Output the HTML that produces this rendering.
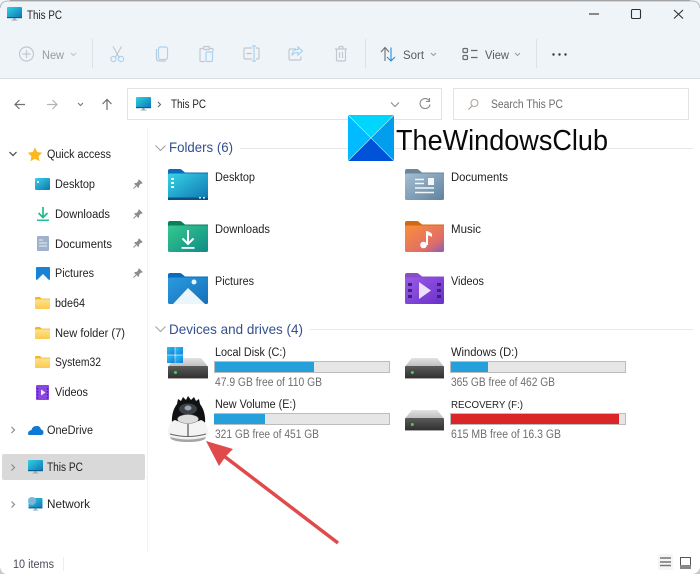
<!DOCTYPE html>
<html lang="en"><head><meta charset="utf-8"><title>This PC</title>
<style>
html,body{margin:0;padding:0;background:#fff;width:700px;height:574px;overflow:hidden}
svg{display:block;position:absolute;left:0;top:0}
text{font-family:"Liberation Sans",sans-serif;font-size:11.5px;fill:#1f1f1f}
.g{fill:#6e6e6e}.h{font-size:14px;fill:#34508f}.d{fill:#9a9a9a}.s{fill:#5a5a5a}
.ic{fill:none;stroke:#c2c8cd;stroke-width:1.2}
.bl{fill:none;stroke:#a9d3f0;stroke-width:1.2}
.nv{fill:none;stroke:#6a6a6a;stroke-width:1.2}
.ch{fill:none;stroke:#6f6f6f;stroke-width:1.2}
</style></head><body>
<svg width="700" height="574" viewBox="0 0 700 574" xmlns="http://www.w3.org/2000/svg">
<defs>
<linearGradient id="mon" x1="0" y1="0" x2="1" y2="1"><stop offset="0" stop-color="#2fd3e0"/><stop offset="1" stop-color="#0d74b8"/></linearGradient>
<linearGradient id="fd" x1="0" y1="0" x2="1" y2="1"><stop offset="0" stop-color="#38d4e8"/><stop offset="1" stop-color="#0f74b0"/></linearGradient>
<linearGradient id="fg" x1="0" y1="0" x2="1" y2="1"><stop offset="0" stop-color="#35c98f"/><stop offset="1" stop-color="#0f8b86"/></linearGradient>
<linearGradient id="fp" x1="0" y1="0" x2="1" y2="1"><stop offset="0" stop-color="#2a9be0"/><stop offset="1" stop-color="#1770b8"/></linearGradient>
<linearGradient id="fdoc" x1="0" y1="0" x2="1" y2="1"><stop offset="0" stop-color="#a5bfd3"/><stop offset="1" stop-color="#60829e"/></linearGradient>
<linearGradient id="fm" x1="0" y1="0" x2="1" y2="1"><stop offset="0" stop-color="#fb8f3a"/><stop offset=".7" stop-color="#df6d68"/><stop offset="1" stop-color="#8d5cb8"/></linearGradient>
<linearGradient id="fv" x1="0" y1="0" x2="1" y2="1"><stop offset="0" stop-color="#9a5be8"/><stop offset="1" stop-color="#6a2fc8"/></linearGradient>
<linearGradient id="yf" x1="0" y1="0" x2="0" y2="1"><stop offset="0" stop-color="#ffe38a"/><stop offset="1" stop-color="#fbc94f"/></linearGradient>
<linearGradient id="hd" x1="0" y1="0" x2="0" y2="1"><stop offset="0" stop-color="#5a5a5a"/><stop offset="1" stop-color="#2f2f2f"/></linearGradient>
<linearGradient id="ht" x1="0" y1="0" x2="0" y2="1"><stop offset="0" stop-color="#e2e2e2"/><stop offset="1" stop-color="#bdbdbd"/></linearGradient>
<linearGradient id="win" x1="0" y1="0" x2="1" y2="1"><stop offset="0" stop-color="#2fc3f5"/><stop offset="1" stop-color="#0f7fd8"/></linearGradient>
<symbol id="pc" viewBox="0 0 15 14" overflow="visible"><rect x="0" y="0" width="15" height="11" rx="1" fill="url(#mon)"/><rect x="0" y="10" width="15" height="1.2" fill="#0b5d94"/><rect x="6.5" y="11" width="2" height="2" fill="#7d98a8"/><rect x="4.5" y="12.6" width="6" height="1" fill="#9db2bf"/></symbol>
<symbol id="yfold" viewBox="0 0 15 12" overflow="visible"><path d="M0 1.2C0 .5.5 0 1.2 0H5l1.6 1.6H15V3H0Z" fill="#f0b52c"/><rect x="0" y="2.4" width="15" height="9.6" rx="1" fill="url(#yf)"/></symbol>
<symbol id="pin" viewBox="0 0 10 10" overflow="visible"><path d="M6 .3 9.7 4 8.8 4.8 8 4.6 6.2 6.4 6 8.4 5.2 8.9 1.2 4.9 1.7 4.1 3.7 3.9 5.4 2 5.2 1.2Z" fill="#8c8c8c"/><path d="M3 7 .5 9.5" stroke="#8c8c8c" stroke-width="1"/></symbol>
<symbol id="hdd" viewBox="0 0 40 21" overflow="visible" preserveAspectRatio="none"><path d="M7 0H33L40 8.500H0Z" fill="url(#ht)"/><rect x="0" y="8" width="40" height="12.500" rx="1" fill="url(#hd)"/><rect x="0" y="20" width="40" height="1" fill="#a8a8a8"/><rect x="6" y="13" width="3" height="3" rx="1.5" fill="#3fd35a"/></symbol>
</defs>

<rect width="700" height="574" fill="#fff"/>
<!-- title + toolbar -->
<rect x="0" y="0" width="700" height="78" fill="#eff4f9"/>
<rect x="0" y="78" width="700" height="1" fill="#dcdfe2"/>
<path d="M0 8Q1 1 8 1H692Q699 1 700 8" fill="none" stroke="#b5b7b9" stroke-width="1"/>
<rect x="10" y="0" width="680" height=".8" fill="#9d9d9d"/>
<use href="#pc" x="7" y="7" width="15" height="14"/>
<text x="27" y="19" textLength="35" lengthAdjust="spacingAndGlyphs">This PC</text>

<path d="M589 14h10" stroke="#303030" stroke-width="1.1"/>
<rect x="631.5" y="9.5" width="9" height="9" rx="1.2" fill="none" stroke="#303030" stroke-width="1.1"/>
<path d="M674 10l9 8.500M683 10l-9 8.500" stroke="#303030" stroke-width="1.1"/>

<circle cx="26.500" cy="54" r="7" class="ic"/><path d="M26.500 50v8M22.500 54h8" class="ic"/>
<text x="42" y="59" class="d" textLength="22" lengthAdjust="spacingAndGlyphs">New</text>
<path d="M71 53l2.500 2.500L76 53" class="ic"/>
<rect x="92" y="39" width="1" height="29" fill="#dde1e5"/>
<!-- cut -->
<path d="M113 46.500l6.500 11.500M121.500 46.500l-6.500 11.500" fill="none" stroke="#bfc5ca" stroke-width="1.1"/>
<circle cx="113.500" cy="59" r="2.600" class="bl"/><circle cx="121" cy="59" r="2.600" class="bl"/>
<!-- copy -->
<rect x="158.500" y="47" width="9" height="12.500" rx="2" class="bl"/><path d="M156.500 49v9.500q0 2.500 2.500 2.500h7" class="ic"/>
<!-- paste -->
<path d="M203 48.500h-2q-1 0-1 1v11q0 1 1 1h4M210 48.500h2q1 0 1 1v2" class="ic"/><rect x="203.500" y="46.500" width="6" height="3" rx="1" class="ic"/><rect x="206" y="52" width="6.500" height="9.500" rx="1" class="bl"/>
<!-- rename -->
<path d="M252 48h-6.500q-1.500 0-1.500 1.500v8q0 1.500 1.500 1.500H252M256 48h1.500q1.500 0 1.500 1.500v8q0 1.500-1.500 1.500H256" class="ic"/><path d="M254 46v15M252 46h4M252 61h4" class="bl"/><path d="M246.500 53.500h5" stroke="#b8bec4" stroke-width="1.200"/>
<!-- share -->
<path d="M296 49h-5.500q-1.500 0-1.500 1.500v8q0 1.500 1.500 1.500h9q1.500 0 1.500-1.500v-2" class="ic"/><path d="M298 47l4.500 4-4.500 4v-2.500c-3 0-5 1-6 3 0-4 2.500-6 6-6Z" class="bl"/>
<!-- delete -->
<path d="M335 49h12M339 49v-1.500q0-1 1-1h2q1 0 1 1V49M336.500 49v10.500q0 1.500 1.500 1.500h6q1.500 0 1.500-1.500V49M339.500 52v6M342.500 52v6" class="ic"/>
<rect x="365" y="39" width="1" height="29" fill="#dde1e5"/>
<path d="M385 61V48M381 52l4-4.500 4 4.500" fill="none" stroke="#707070" stroke-width="1.100"/><path d="M391 47.500V61M387 57l4 4 4-4" fill="none" stroke="#2a8bdc" stroke-width="1.100"/>
<text x="403" y="59" class="s" textLength="21" lengthAdjust="spacingAndGlyphs">Sort</text>
<path d="M431 53l2.500 2.500L436 53" fill="none" stroke="#9a9a9a" stroke-width="1"/>
<rect x="463" y="48.500" width="4.500" height="4" rx="1" class="nv"/><rect x="463" y="55.500" width="4.500" height="4" rx="1" class="nv"/><path d="M471 50.500h6.500M471 57.500h6.500" class="nv"/>
<text x="485" y="59" class="s" textLength="24" lengthAdjust="spacingAndGlyphs">View</text>
<path d="M515 53l2.500 2.500L520 53" fill="none" stroke="#9a9a9a" stroke-width="1"/>
<rect x="536" y="39" width="1" height="29" fill="#dde1e5"/>
<circle cx="553.500" cy="54.500" r="1.200" fill="#333"/><circle cx="559.500" cy="54.500" r="1.200" fill="#333"/><circle cx="565.500" cy="54.500" r="1.200" fill="#333"/>

<!-- nav -->
<path d="M25 104.500H15M19.500 100l-4.500 4.500 4.500 4.500" fill="none" stroke="#6f6f6f" stroke-width="1.200"/>
<path d="M47 104.500H57M52.500 100l4.500 4.500-4.500 4.500" fill="none" stroke="#b3b3b3" stroke-width="1.200"/>
<path d="M78 103l2.500 2.500L83 103" fill="none" stroke="#777" stroke-width="1.100"/>
<path d="M107 110V99.500M102.500 104l4.500-4.500 4.500 4.500" fill="none" stroke="#6f6f6f" stroke-width="1.200"/>
<rect x="127.500" y="88.500" width="314" height="31" fill="#fff" stroke="#e3e3e3"/>
<use href="#pc" x="136" y="97" width="15" height="14"/>
<path d="M158 102l2.500 2.500-2.500 2.500" fill="none" stroke="#666" stroke-width="1.100"/>
<text x="171" y="108" textLength="35" lengthAdjust="spacingAndGlyphs">This PC</text>
<path d="M391 102.500l4 4 4-4" fill="none" stroke="#8a8a8a" stroke-width="1.100"/>
<path d="M429 100.500a5 5 0 1 0 1 4M429.500 98v3.500H426" fill="none" stroke="#8a8a8a" stroke-width="1.100"/>
<rect x="453.500" y="88.500" width="235" height="31" fill="#fff" stroke="#e3e3e3"/>
<circle cx="474.500" cy="103" r="3.500" fill="none" stroke="#a9a9a9" stroke-width="1.100"/><path d="M472 106l-3.500 3.500" stroke="#c98f6a" stroke-width="1.100"/>
<text x="491" y="108" class="g" textLength="72" lengthAdjust="spacingAndGlyphs">Search This PC</text>

<!-- sidebar -->
<rect x="147" y="128" width="1" height="424" fill="#f2f2f2"/>
<rect x="2" y="454" width="143" height="26" rx="2" fill="#d9d9d9"/>
<path d="M9.500 152l3.500 3.500 3.500-3.500" fill="none" stroke="#444" stroke-width="1.200"/>
<path d="M35 147.500l2.200 4.500 5 .7-3.600 3.500.9 5-4.500-2.400-4.500 2.400.9-5-3.600-3.500 5-.7Z" fill="#fbb81c"/>
<text x="47" y="158" textLength="64" lengthAdjust="spacingAndGlyphs">Quick access</text>

<rect x="35" y="178" width="15" height="12" rx="1" fill="url(#fd)"/><rect x="37" y="181" width="2" height="2" fill="#e8fbff"/>
<text x="55" y="188" textLength="40" lengthAdjust="spacingAndGlyphs">Desktop</text>
<use href="#pin" x="133" y="179" width="10" height="10"/>

<path d="M43 207v10M38.500 213l4.500 4.500 4.500-4.500" fill="none" stroke="#21b98a" stroke-width="1.700"/><rect x="37" y="219.500" width="12" height="1.500" fill="#1fc09a"/>
<text x="55" y="218" textLength="55" lengthAdjust="spacingAndGlyphs">Downloads</text>
<use href="#pin" x="133" y="209" width="10" height="10"/>

<rect x="37" y="236" width="12" height="15" rx="1" fill="#9fb2cb"/><path d="M39 240h4M39 243h8M39 246h8" stroke="#e8eef5" stroke-width="1"/>
<text x="55" y="248" textLength="57" lengthAdjust="spacingAndGlyphs">Documents</text>
<use href="#pin" x="133" y="238" width="10" height="10"/>

<rect x="36" y="267" width="14" height="13" rx="1" fill="#1a82d6"/><path d="M37 280l6-6 6 6Z" fill="#f2f8fd"/>
<text x="55" y="277" textLength="39" lengthAdjust="spacingAndGlyphs">Pictures</text>
<use href="#pin" x="133" y="268" width="10" height="10"/>

<use href="#yfold" x="35" y="297" width="15" height="12"/>
<text x="55" y="307" textLength="30" lengthAdjust="spacingAndGlyphs">bde64</text>
<use href="#yfold" x="35" y="327" width="15" height="12"/>
<text x="55" y="337" textLength="70" lengthAdjust="spacingAndGlyphs">New folder (7)</text>
<use href="#yfold" x="35" y="356" width="15" height="12"/>
<text x="55" y="366" textLength="46" lengthAdjust="spacingAndGlyphs">System32</text>
<rect x="36" y="385" width="13" height="15" rx="1" fill="#8b45e0"/><path d="M41 389.500l4.500 3-4.500 3Z" fill="#f5ecff"/><path d="M37.500 388v11M47.500 388v11" stroke="#4e1f99" stroke-width="1.300" stroke-dasharray="1.500 1.500"/>
<text x="55" y="396" textLength="33" lengthAdjust="spacingAndGlyphs">Videos</text>

<path d="M11.500 427l3 3-3 3" fill="none" stroke="#8a8a8a" stroke-width="1.200"/>
<path d="M28 434q0-3.500 3.500-4 1-4.500 6-4 3 .5 3.500 3.500 2.500.5 2.500 3 0 2.500-2.500 2.500H30q-2 0-2-1Z" fill="#0f78d4"/>
<text x="47" y="434" textLength="46" lengthAdjust="spacingAndGlyphs">OneDrive</text>

<path d="M11.500 464.500l3 3-3 3" fill="none" stroke="#8a8a8a" stroke-width="1.200"/>
<use href="#pc" x="28" y="460" width="15" height="14"/>
<text x="47" y="471" textLength="36" lengthAdjust="spacingAndGlyphs">This PC</text>

<path d="M11.500 501.500l3 3-3 3" fill="none" stroke="#8a8a8a" stroke-width="1.200"/>
<use href="#pc" x="28" y="498" width="15" height="13"/><circle cx="32" cy="501" r="4" fill="#7fb6d8"/>
<text x="47" y="508" textLength="43" lengthAdjust="spacingAndGlyphs">Network</text>

<text x="13" y="568" style="fill:#4a4a5a" textLength="41" lengthAdjust="spacingAndGlyphs">10 items</text>
<rect x="63" y="557" width="1" height="14" fill="#eee"/>
<rect x="658" y="554" width="15" height="16" fill="#f5f5f5"/>
<path d="M660 558h11M660 562h11" stroke="#333" stroke-width="1"/><path d="M660 565.500h11" stroke="#777" stroke-width="1.500"/>
<rect x="680.500" y="557.500" width="10" height="11" fill="#fff" stroke="#555"/><rect x="680" y="565" width="11" height="4" fill="#888"/>
<path d="M693 574q5-1 7-6v6Z" fill="#c9c9c9"/><path d="M0 567q1 6 6 7H0Z" fill="#c9c9c9"/>

<!-- Folders -->
<path d="M155.500 145.500l5 5 5-5" fill="none" stroke="#a0a0a0" stroke-width="1"/>
<text x="169" y="152" class="h" textLength="64" lengthAdjust="spacingAndGlyphs">Folders (6)</text>
<rect x="240" y="148" width="453" height="1" fill="#e8e8e8"/>

<!-- folder icons -->
<g>
<path d="M168 171q0-2 2-2h10q1 0 2 1l3 2.500h23v2h-40Z" fill="#0c6cbc"/>
<rect x="168" y="173.500" width="40" height="26.500" rx="1.500" fill="url(#fd)"/><rect x="168" y="197.500" width="40" height="2.500" fill="#0b4f84"/>
<path d="M171 178h3v2h-3ZM171 182h3v2h-3ZM171 186h3v2h-3Z" fill="#e8fbff"/><path d="M199 197h2v1.500h-2ZM203 197h2v1.500h-2Z" fill="#d6f5fb"/>
</g>
<g>
<path d="M168 223q0-2 2-2h10q1 0 2 1l3 2.500h23v2h-40Z" fill="#0a7f5f"/>
<rect x="168" y="225.500" width="40" height="26.500" rx="1.500" fill="url(#fg)"/>
<path d="M188 230v14M182.500 238.500l5.500 5.500 5.500-5.500" fill="none" stroke="#fff" stroke-width="2"/><rect x="181.500" y="247" width="13" height="1.800" fill="#fff"/>
</g>
<g>
<path d="M168 275q0-2 2-2h10q1 0 2 1l3 2.500h23v2h-40Z" fill="#0c6cbc"/>
<rect x="168" y="277.500" width="40" height="26.500" rx="1.500" fill="url(#fp)"/>
<circle cx="194" cy="282" r="2.500" fill="#e8f5fd"/><path d="M173 304l15-16 17 16Z" fill="#eaf5fc"/>
</g>
<g>
<path d="M405 171q0-2 2-2h10q1 0 2 1l3 2.500h22v2h-39Z" fill="#6a8798"/>
<rect x="405" y="173.500" width="39" height="26.500" rx="1.500" fill="url(#fdoc)"/>
<path d="M415 179.500h9M415 183.500h9M415 188h19M415 192.500h19" stroke="#f3f7fa" stroke-width="1.500"/><rect x="428" y="178" width="6" height="7" fill="#f3f7fa"/>
</g>
<g>
<path d="M405 223q0-2 2-2h10q1 0 2 1l3 2.500h22v2h-39Z" fill="#d06a10"/>
<rect x="405" y="225.500" width="39" height="26.500" rx="1.500" fill="url(#fm)"/>
<circle cx="423.500" cy="245" r="3.300" fill="#fff"/><path d="M426 245v-14q4 .5 6 3v3q-2-1.500-4-1.500V245Z" fill="#fff"/>
</g>
<g>
<path d="M405 275q0-2 2-2h10q1 0 2 1l3 2.500h22v2h-39Z" fill="#8a4dc8"/>
<rect x="405" y="277.500" width="39" height="26.500" rx="1.500" fill="url(#fv)"/>
<path d="M419 282l12 8.500-12 8.500Z" fill="#ece0fb"/>
<path d="M408 283h4v3h-4ZM408 289h4v3h-4ZM408 295h4v3h-4ZM437 283h4v3h-4ZM437 289h4v3h-4ZM437 295h4v3h-4Z" fill="#3c2475"/>
</g>
<text x="215" y="181" textLength="40" lengthAdjust="spacingAndGlyphs">Desktop</text>
<text x="215" y="233" textLength="55" lengthAdjust="spacingAndGlyphs">Downloads</text>
<text x="215" y="285" textLength="39" lengthAdjust="spacingAndGlyphs">Pictures</text>
<text x="451" y="181" textLength="57" lengthAdjust="spacingAndGlyphs">Documents</text>
<text x="451" y="233" textLength="30" lengthAdjust="spacingAndGlyphs">Music</text>
<text x="451" y="285" textLength="33" lengthAdjust="spacingAndGlyphs">Videos</text>

<!-- Devices -->
<path d="M155.500 326.500l5 5 5-5" fill="none" stroke="#a0a0a0" stroke-width="1"/>
<text x="169" y="334" class="h" textLength="134" lengthAdjust="spacingAndGlyphs">Devices and drives (4)</text>
<rect x="310" y="329" width="383" height="1" fill="#e8e8e8"/>

<use href="#hdd" x="168" y="358" width="40" height="21"/>
<g fill="url(#win)"><rect x="167" y="347" width="7.700" height="7.700"/><rect x="175.300" y="347" width="7.700" height="7.700"/><rect x="167" y="355.300" width="7.700" height="7.700"/><rect x="175.300" y="355.300" width="7.700" height="7.700"/></g>
<text x="215" y="356" textLength="71" lengthAdjust="spacingAndGlyphs">Local Disk (C:)</text>
<rect x="214.500" y="361.500" width="175" height="11" fill="#e6e6e6" stroke="#bcbcbc"/><rect x="215" y="362" width="99" height="10" fill="#26a0da"/>
<text x="215" y="386" class="g" textLength="107" lengthAdjust="spacingAndGlyphs">47.9 GB free of 110 GB</text>

<use href="#hdd" x="405" y="358" width="39" height="21"/>
<text x="451" y="356" textLength="67" lengthAdjust="spacingAndGlyphs">Windows (D:)</text>
<rect x="450.500" y="361.500" width="175" height="11" fill="#e6e6e6" stroke="#bcbcbc"/><rect x="451" y="362" width="37" height="10" fill="#26a0da"/>
<text x="451" y="386" class="g" textLength="104" lengthAdjust="spacingAndGlyphs">365 GB free of 462 GB</text>

<!-- E drive icon -->
<path d="M172 424q-1-12 5-20l1-5 3 2 2-4 3 3 2-4 3 4 3-3 2 4 3-2 1 5q6 8 5 20l-4 4h-26Z" fill="#111"/>
<ellipse cx="188" cy="409" rx="9" ry="5.500" fill="#3b4048"/><ellipse cx="188" cy="408" rx="3.500" ry="2.500" fill="#9ba2ab"/>
<path d="M168 431q1-9 7-11 5 2.500 13 2.500t13-2.500q6 2 7 11 0 6-4 8-6 3-16 3t-16-3q-4-2-4-8Z" fill="#f3f3f3"/>
<ellipse cx="188" cy="419" rx="10.500" ry="4.500" fill="#dcdcdc" stroke="#777" stroke-width=".5"/>
<path d="M188 424v12" stroke="#333" stroke-width="1" fill="none"/>
<path d="M170 434q18 5 36 0" stroke="#666" stroke-width="1" fill="none"/>
<path d="M170 437q18 5 36 0l-1 2q-5 3-17 3t-17-3Z" fill="#a5a5a5"/>
<text x="215" y="408" textLength="81" lengthAdjust="spacingAndGlyphs">New Volume (E:)</text>
<rect x="214.500" y="413.500" width="175" height="11" fill="#e6e6e6" stroke="#bcbcbc"/><rect x="214" y="414" width="51" height="10" fill="#26a0da"/>
<text x="215" y="438" class="g" textLength="104" lengthAdjust="spacingAndGlyphs">321 GB free of 451 GB</text>

<use href="#hdd" x="405" y="410" width="39" height="21"/>
<text x="451" y="408" style="font-size:10.5px" textLength="72" lengthAdjust="spacingAndGlyphs">RECOVERY (F:)</text>
<rect x="450.500" y="413.500" width="175" height="11" fill="#e6e6e6" stroke="#bcbcbc"/><rect x="451" y="414" width="168" height="10" fill="#da2626"/>
<text x="451" y="438" class="g" textLength="110" lengthAdjust="spacingAndGlyphs">615 MB free of 16.3 GB</text>

<!-- arrow -->
<path d="M338 543 216 450" stroke="#e04a4a" stroke-width="3.500" fill="none"/>
<path d="M206 441 233 449 226 456 219 466Z" fill="#e04a4a"/>

<!-- watermark logo -->
<path d="M348 115H394L371 138Z" fill="#00d6fb"/>
<path d="M348 115V161L371 138Z" fill="#00bbff"/>
<path d="M394 115V161L371 138Z" fill="#009eec"/>
<path d="M348 161H394L371 138Z" fill="#0052d9"/>
<path d="M348 115 394 161M394 115 348 161" stroke="#bfefff" stroke-width=".6"/>
<text x="396" y="150" style="font-size:29px;fill:#0a0a0a" textLength="212" lengthAdjust="spacingAndGlyphs">TheWindowsClub</text>
</svg>
</body></html>
